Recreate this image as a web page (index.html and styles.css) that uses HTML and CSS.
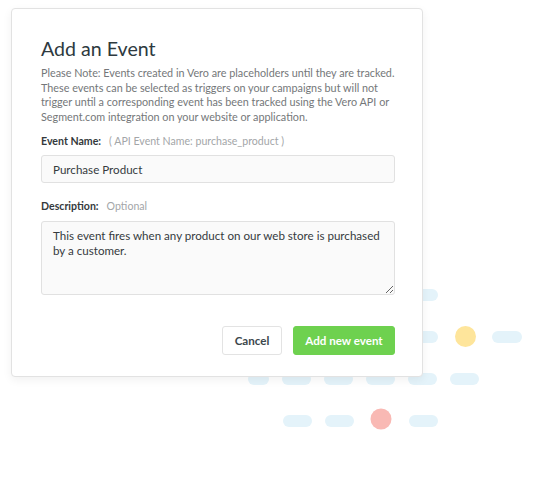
FILE: index.html
```html
<!DOCTYPE html>
<html>
<head>
<meta charset="utf-8">
<link rel="stylesheet" href="styles.css">
</head>
<body>
<svg class="decor" width="537" height="492" viewBox="0 0 537 492" xmlns="http://www.w3.org/2000/svg">
  <g fill="#e4f3fa">
    <rect x="408" y="289" width="30" height="12" rx="6"/>
    <rect x="408" y="331" width="30" height="12" rx="6"/>
    <rect x="492" y="331" width="30" height="12" rx="6"/>
    <rect x="248" y="373" width="21" height="12" rx="6"/>
    <rect x="282" y="373" width="29" height="12" rx="6"/>
    <rect x="324" y="373" width="29" height="12" rx="6"/>
    <rect x="366" y="373" width="29" height="12" rx="6"/>
    <rect x="408" y="373" width="29" height="12" rx="6"/>
    <rect x="450" y="373" width="29" height="12" rx="6"/>
    <rect x="283" y="415" width="29" height="12" rx="6"/>
    <rect x="325" y="415" width="29" height="12" rx="6"/>
    <rect x="409" y="415" width="29" height="12" rx="6"/>
  </g>
  <circle cx="465.5" cy="336.5" r="10.5" fill="#fee59b"/>
  <circle cx="381" cy="419" r="10.5" fill="#f9b9b4"/>
</svg>
<div class="card">
  <h1 class="title">Add an Event</h1>
  <p class="note">Please Note: Events created in Vero are placeholders until they are tracked. These events can be selected as triggers on your campaigns but will not trigger until a corresponding event has been tracked using the Vero API or Segment.com integration on your website or application.</p>
  <div class="label label-name"><span class="label-strong">Event Name:</span><span class="label-hint">( API Event Name: purchase_product )</span></div>
  <input class="field" type="text" value="Purchase Product">
  <div class="label label-desc"><span class="label-strong">Description:</span><span class="label-hint">Optional</span></div>
  <textarea class="field area">This event fires when any product on our web store is purchased by a customer.</textarea>
  <div class="actions">
    <button class="btn btn-cancel">Cancel</button>
    <button class="btn btn-primary">Add new event</button>
  </div>
</div>
</body>
</html>
```
FILE: styles.css
```css
html, body {
  margin: 0;
  padding: 0;
  background: #ffffff;
}
body {
  position: relative;
  width: 537px;
  height: 492px;
  overflow: hidden;
  font-family: "Lato", "Open Sans", sans-serif;
}
.decor {
  position: absolute;
  left: 0;
  top: 0;
}
.card {
  position: relative;
  z-index: 1;
  box-sizing: border-box;
  margin: 8px 0 0 11px;
  width: 412px;
  height: 369px;
  padding: 28px 28px 0 29px;
  background: #ffffff;
  border: 1px solid #e2e2e2;
  border-radius: 4px;
  box-shadow: 0 3px 10px rgba(0, 0, 0, 0.06);
  display: flex;
  flex-direction: column;
}
.title {
  margin: 0;
  font-size: 19.6px;
  line-height: 24px;
  font-weight: 400;
  color: #2e3a3f;
}
.note {
  margin: 5px 0 0;
  width: 356px;
  font-size: 10.8px;
  line-height: 14.6px;
  color: #747779;
}
.label {
  display: flex;
  gap: 8px;
  font-size: 10.6px;
  line-height: 16px;
}
.label-name {
  margin-top: 9px;
}
.label-desc {
  margin-top: 15px;
}
.label-strong {
  font-weight: 700;
  color: #34393c;
}
.label-hint {
  color: #a3a6a8;
}
.field {
  box-sizing: border-box;
  margin: 6px 0 0;
  width: 354px;
  height: 28px;
  padding: 0 11px;
  background: #fafafa;
  border: 1px solid #e1e1e1;
  border-radius: 3px;
  font-family: "Lato", "Open Sans", sans-serif;
  font-size: 11.6px;
  color: #363b3e;
  outline: none;
}
.area {
  margin-top: 7px;
  height: 74px;
  padding: 7px 11px;
  line-height: 14.5px;
  resize: both;
}
.actions {
  margin-top: 31px;
  display: flex;
  justify-content: flex-end;
  gap: 11px;
  width: 354px;
}
.btn {
  box-sizing: border-box;
  height: 29px;
  border-radius: 3px;
  font-family: "Lato", "Open Sans", sans-serif;
  font-size: 11.6px;
  font-weight: 700;
  padding: 0;
  cursor: pointer;
}
.btn-cancel {
  width: 60px;
  background: #ffffff;
  border: 1px solid #e3e3e3;
  color: #3c474c;
}
.btn-primary {
  width: 102px;
  background: #6ed14f;
  border: 1px solid #6ed14f;
  color: #ffffff;
}
```
